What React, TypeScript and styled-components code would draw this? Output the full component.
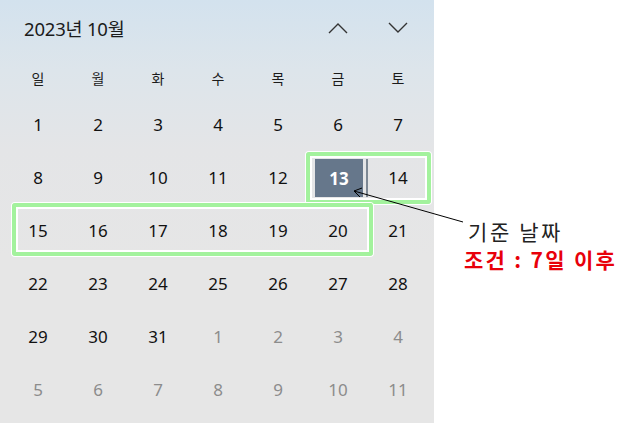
import React from 'react';
import styled, { createGlobalStyle } from 'styled-components';

const GlobalStyle = createGlobalStyle`
  html, body {
    margin: 0;
    padding: 0;
    background: #ffffff;
  }
  body {
    font-family: "Noto Sans", "Noto Sans CJK KR", sans-serif;
  }
`;

type Cell = { day: number; muted?: boolean };

const weekdays = ['일', '월', '화', '수', '목', '금', '토'];

const buildWeeks = (): Cell[][] => {
  const cells: Cell[] = [];
  for (let d = 1; d <= 31; d++) cells.push({ day: d });
  for (let d = 1; d <= 11; d++) cells.push({ day: d, muted: true });
  const weeks: Cell[][] = [];
  for (let i = 0; i < cells.length; i += 7) weeks.push(cells.slice(i, i + 7));
  return weeks;
};

const App: React.FC = () => {
  const weeks = buildWeeks();

  return (
    <>
      <GlobalStyle />
      <Page>
        <Calendar>
          <Header>
            <MonthTitle>2023년 10월</MonthTitle>
            <NavButtons>
              <NavButton aria-label="previous">
                <svg width="22" height="14" viewBox="0 0 22 14">
                  <path d="M2 12 L11 3 L20 12" fill="none" stroke="#333" strokeWidth="1.4" />
                </svg>
              </NavButton>
              <NavButton aria-label="next">
                <svg width="22" height="14" viewBox="0 0 22 14">
                  <path d="M2 2 L11 11 L20 2" fill="none" stroke="#333" strokeWidth="1.4" />
                </svg>
              </NavButton>
            </NavButtons>
          </Header>

          <Grid>
            {weekdays.map((w) => (
              <Weekday key={w}>{w}</Weekday>
            ))}
            {weeks.map((week, wi) =>
              week.map((c, ci) =>
                c.day === 13 && !c.muted ? (
                  <DayCell key={`${wi}-${ci}`}>
                    <Selected>13</Selected>
                    <SelectedEdge />
                  </DayCell>
                ) : (
                  <DayCell key={`${wi}-${ci}`} $muted={c.muted}>
                    {c.day}
                  </DayCell>
                )
              )
            )}
          </Grid>

          <Frame style={{ left: 306, top: 152, width: 125, height: 52 }} />
          <Frame style={{ left: 12, top: 203, width: 361, height: 53 }} />
        </Calendar>

        <Notes>
          <NoteTitle>기준 날짜</NoteTitle>
          <NoteRule>조건 : 7일 이후</NoteRule>
        </Notes>

        <Arrow width="621" height="423" viewBox="0 0 621 423">
          <line x1="463" y1="222" x2="354" y2="191" stroke="#000" strokeWidth="1" />
          <path d="M362 188 L354 191 L360 197" fill="none" stroke="#000" strokeWidth="1" />
        </Arrow>
      </Page>
    </>
  );
};

export default App;

const Page = styled.div`
  position: relative;
  width: 621px;
  height: 423px;
  display: flex;
  overflow: hidden;
`;

const Calendar = styled.div`
  position: relative;
  width: 434px;
  height: 423px;
  flex-shrink: 0;
  background: linear-gradient(180deg, #d3e2ee 0px, #dde5eb 70px, #e4e5e7 150px, #e6e6e6 260px, #e6e6e6 100%);
  font-family: "Noto Sans", "Noto Sans CJK KR", sans-serif;
`;

const Header = styled.div`
  height: 56px;
  display: flex;
  align-items: center;
  justify-content: space-between;
  padding: 0 24px;
  box-sizing: border-box;
`;

const MonthTitle = styled.div`
  font-size: 18.5px;
  color: #1b1b1b;
  letter-spacing: -0.2px;
`;

const NavButtons = styled.div`
  display: flex;
  gap: 38px;
  margin-right: 1px;
`;

const NavButton = styled.div`
  width: 22px;
  height: 14px;
  display: flex;
  align-items: center;
  justify-content: center;
`;

const Grid = styled.div`
  display: grid;
  grid-template-columns: repeat(7, 60px);
  grid-template-rows: 42px repeat(6, 53px);
  padding-left: 8px;
`;

const Weekday = styled.div`
  display: flex;
  align-items: center;
  justify-content: center;
  font-family: "Noto Sans CJK KR", sans-serif;
  font-size: 14px;
  color: #1b1b1b;
  padding-top: 2px;
`;

const DayCell = styled.div<{ $muted?: boolean }>`
  position: relative;
  display: flex;
  align-items: center;
  justify-content: center;
  font-size: 17px;
  color: ${(p) => (p.$muted ? '#8c8c8c' : '#111111')};
`;

const Selected = styled.div`
  position: absolute;
  left: 7px;
  top: 8px;
  width: 48px;
  height: 38px;
  background: #66778b;
  color: #ffffff;
  font-weight: 700;
  display: flex;
  align-items: center;
  justify-content: center;
`;

const SelectedEdge = styled.div`
  position: absolute;
  left: 58px;
  top: 8px;
  width: 2px;
  height: 38px;
  background: #7d8894;
`;

const Frame = styled.div`
  position: absolute;
  box-sizing: border-box;
  border: 4px solid #a3f29d;
  border-radius: 3px;
  box-shadow: 0 0 0 1px #ffffff, inset 0 0 0 2px #ffffff;
`;

const Notes = styled.div`
  flex: 1;
  background: #ffffff;
  padding: 217px 0 0 34px;
  font-family: "Noto Sans CJK KR", sans-serif;
`;

const NoteTitle = styled.div`
  font-size: 21px;
  color: #222222;
  line-height: 28px;
  letter-spacing: 2.6px;
`;

const NoteRule = styled.div`
  font-size: 21px;
  font-weight: 700;
  color: #e8000a;
  line-height: 28px;
  letter-spacing: 2.3px;
  margin-left: -4px;
  white-space: nowrap;
`;

const Arrow = styled.svg`
  position: absolute;
  left: 0;
  top: 0;
  pointer-events: none;
`;
